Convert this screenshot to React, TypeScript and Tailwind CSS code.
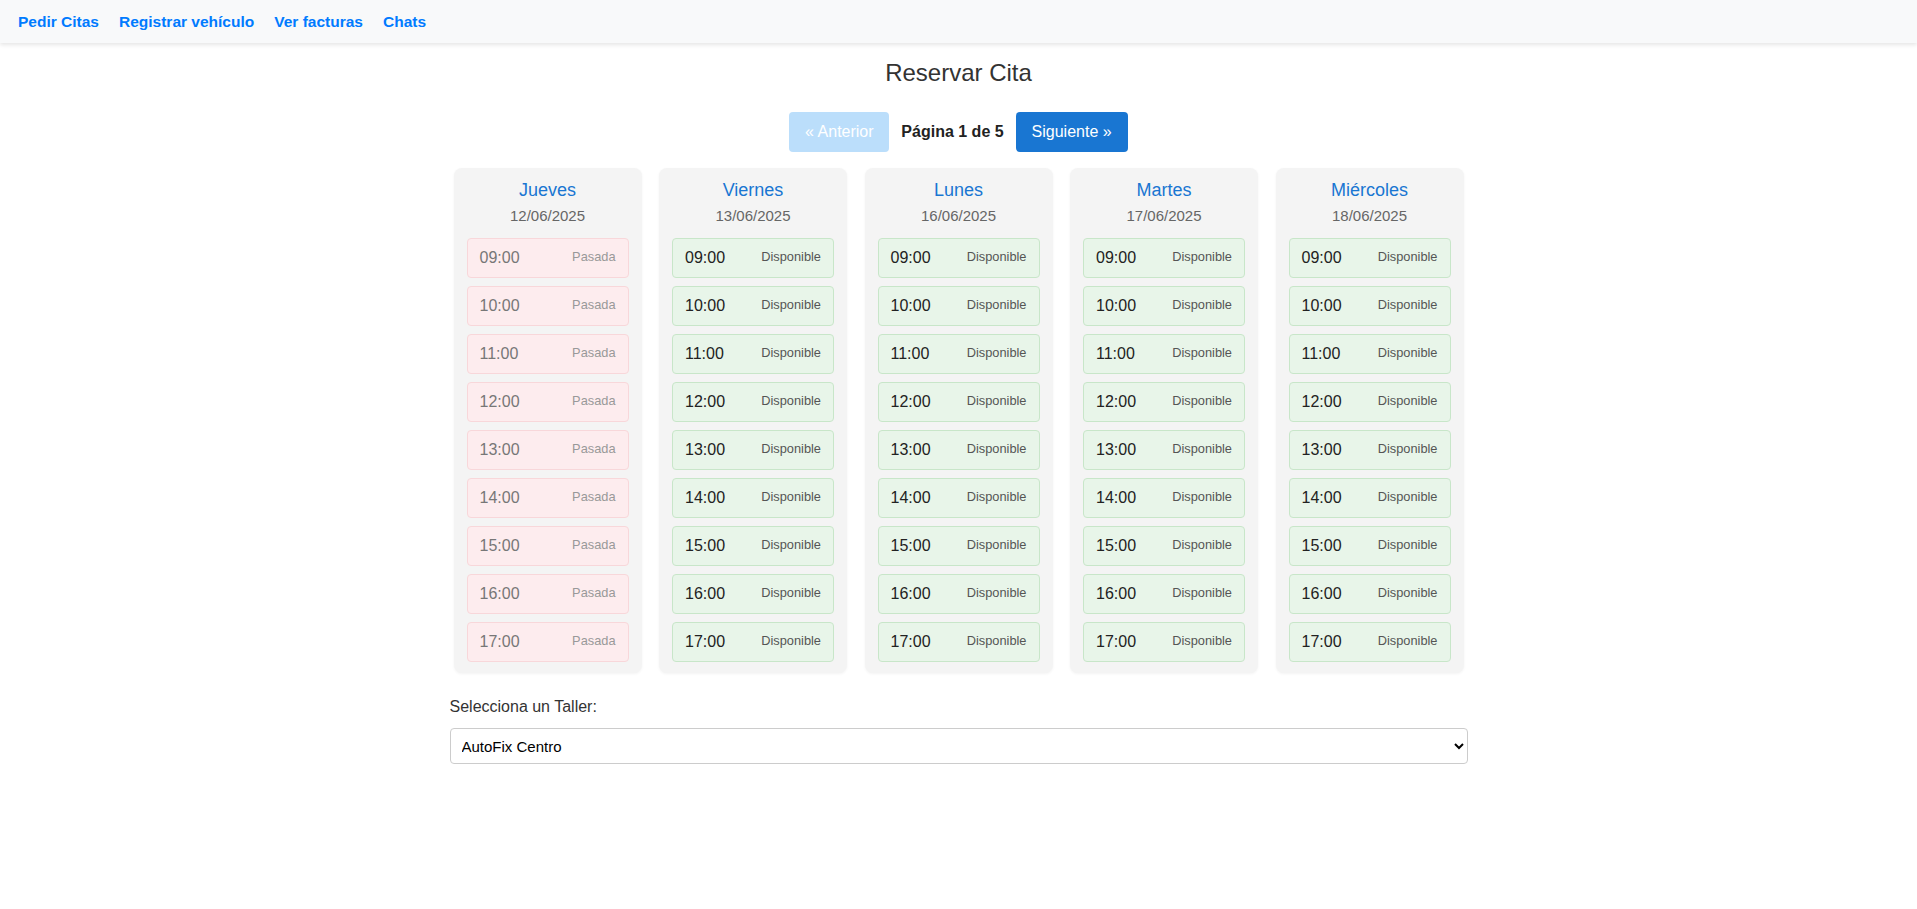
import React from "react";

const days = [
  { name: "Jueves", date: "12/06/2025", past: true },
  { name: "Viernes", date: "13/06/2025", past: false },
  { name: "Lunes", date: "16/06/2025", past: false },
  { name: "Martes", date: "17/06/2025", past: false },
  { name: "Miércoles", date: "18/06/2025", past: false },
];

const hours = ["09:00", "10:00", "11:00", "12:00", "13:00", "14:00", "15:00", "16:00", "17:00"];

export default function App() {
  return (
    <div className="min-h-screen bg-white" style={{ fontFamily: '"Liberation Sans", Arial, sans-serif' }}>
      <nav className="h-[43px] bg-[#f8f9fa] shadow-[0_2px_4px_rgba(0,0,0,0.1)] flex items-center pl-[18px] gap-[20px]">
        {["Pedir Citas", "Registrar vehículo", "Ver facturas", "Chats"].map((l) => (
          <a key={l} href="#" className="text-[15.5px] font-bold text-[#007bff] leading-none">
            {l}
          </a>
        ))}
      </nav>

      <div className="w-[1018px] mx-auto">
        <h2 className="mt-[16px] text-center text-[24px] leading-[28px] text-[#333]">Reservar Cita</h2>

        <div className="mt-[25px] flex items-center justify-center gap-[12px]">
          <button className="h-[40px] w-[100px] rounded-[4px] bg-[#bbdefb] text-white text-[16px]">« Anterior</button>
          <span className="text-[16px] font-bold text-[#222]">Página 1 de 5</span>
          <button className="h-[40px] w-[112px] rounded-[4px] bg-[#1976d2] text-white text-[16px]">Siguiente »</button>
        </div>

        <div className="mt-[16px] flex justify-center gap-[17.5px]">
          {days.map((d) => (
            <div
              key={d.name}
              className="w-[188px] rounded-[8px] bg-[#f4f4f4] shadow-[0_1px_3px_rgba(0,0,0,0.05)] px-[13px] pt-[12px] pb-[11px]"
            >
              <div className="text-center text-[18px] leading-[21px] text-[#1976d2]">{d.name}</div>
              <div className="mt-[6px] text-center text-[15px] leading-[17px] text-[#666]">{d.date}</div>
              <div className="mt-[14px] flex flex-col gap-[8px]">
                {hours.map((h) => (
                  <div
                    key={h}
                    className={
                      d.past
                        ? "h-[40px] rounded-[4px] border border-[#f8d7da] bg-[#fdecee] px-[12px] py-[10px] flex justify-between items-start"
                        : "h-[40px] rounded-[4px] border border-[#c8e6c9] bg-[#e8f5e9] px-[12px] py-[10px] flex justify-between items-start"
                    }
                  >
                    <span className={d.past ? "text-[16px] leading-[18px] text-[#777]" : "text-[16px] leading-[18px] text-[#222]"}>
                      {h}
                    </span>
                    <span className={d.past ? "text-[12.8px] leading-[15px] text-[#999]" : "text-[12.8px] leading-[15px] text-[#555]"}>
                      {d.past ? "Pasada" : "Disponible"}
                    </span>
                  </div>
                ))}
              </div>
            </div>
          ))}
        </div>

        <label className="block mt-[25px] text-[16px] leading-[18px] text-[#333]">Selecciona un Taller:</label>
        <select className="mt-[12px] block w-full h-[36px] rounded-[4px] border border-[#ccc] bg-white px-[7px] text-[15px] text-black">
          <option>AutoFix Centro</option>
          <option>AutoFix Norte</option>
        </select>
      </div>
    </div>
  );
}
